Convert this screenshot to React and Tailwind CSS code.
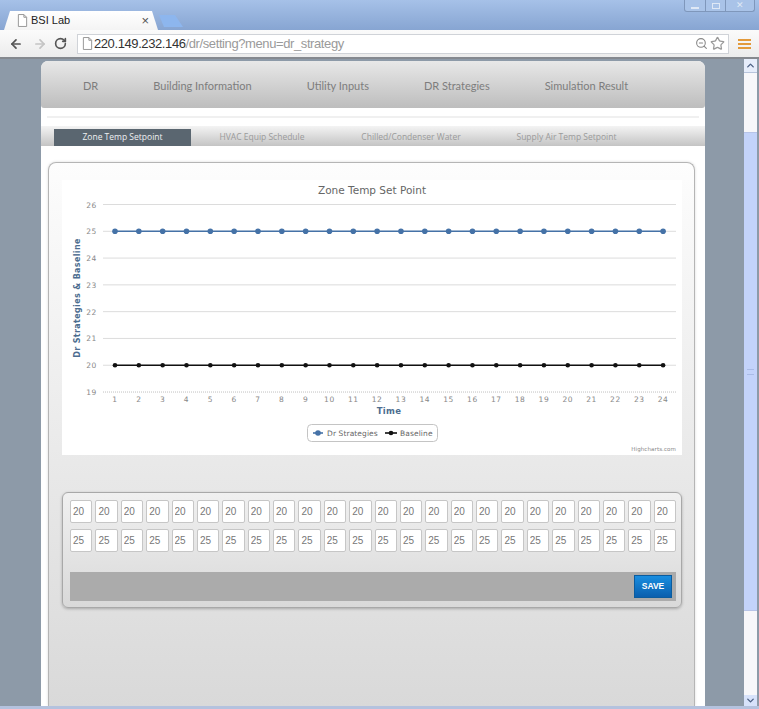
import React from "react";
import { ArrowLeft, ArrowRight, RotateCw, ZoomOut, Star, ChevronUp, ChevronDown } from "lucide-react";

const hours = Array.from({ length: 24 }, (_, i) => i + 1);
const yLabels = [26, 25, 24, 23, 22, 21, 20, 19];

// chart coordinates, origin is the top left of the white chart box
const xAt = (h) => 53 + (h - 1) * 23.83;
const yAt = (v) => 24.5 + (26 - v) * 26.79;

const FileIcon = ({ className }) => (
  <svg viewBox="0 0 12 14" className={className} fill="#fff" stroke="#8f8f8f">
    <path d="M1.5 .5h6l3 3v10h-9z" />
    <path d="M7.5 .5v3h3" fill="none" />
  </svg>
);

const Chart = () => (
  <svg width="620" height="275" viewBox="0 0 620 275" className="block bg-white">
    <text x="310" y="14" textAnchor="middle" fontFamily="DejaVu Sans" fontSize="10.5" fill="#666">
      Zone Temp Set Point
    </text>
    {yLabels.map((v) => (
      <g key={v}>
        <line x1="41" x2="614" y1={yAt(v)} y2={yAt(v)} stroke={v === 19 ? "#c0c0c0" : "#dcdcdc"} strokeDasharray={v === 19 ? "1 1" : undefined} />
        <text x="35" y={yAt(v) + 3} textAnchor="end" fontFamily="DejaVu Sans" fontSize="7.5" letterSpacing=".6" fill="#888">
          {v}
        </text>
      </g>
    ))}
    <text
      transform="translate(18 118) rotate(-90)"
      textAnchor="middle"
      fontFamily="DejaVu Sans"
      fontSize="8"
      fontWeight="700"
      letterSpacing=".35"
      fill="#4d6d8f"
    >
      Dr Strategies &amp; Baseline
    </text>
    {hours.map((h) => (
      <text key={h} x={xAt(h)} y="222" textAnchor="middle" fontFamily="DejaVu Sans" fontSize="7.5" letterSpacing=".6" fill="#888">
        {h}
      </text>
    ))}
    <text x="327" y="234" textAnchor="middle" fontFamily="DejaVu Sans" fontSize="8.5" fontWeight="700" letterSpacing=".3" fill="#4d6d8f">
      Time
    </text>

    <line x1={xAt(1)} x2={xAt(24)} y1={yAt(25)} y2={yAt(25)} stroke="#4572a7" strokeWidth="1.6" />
    <line x1={xAt(1)} x2={xAt(24)} y1={yAt(20)} y2={yAt(20)} stroke="#111" strokeWidth="1.6" />
    {hours.map((h) => (
      <g key={h}>
        <circle cx={xAt(h)} cy={yAt(25)} r="2.8" fill="#4572a7" />
        <circle cx={xAt(h)} cy={yAt(20)} r="2.3" fill="#111" />
      </g>
    ))}

    <rect x="245.5" y="244.5" width="130" height="17" rx="4" fill="#fff" stroke="#c4c4c4" />
    <line x1="251" x2="261" y1="253" y2="253" stroke="#4572a7" strokeWidth="1.6" />
    <circle cx="256" cy="253" r="2.8" fill="#4572a7" />
    <text x="265" y="256" fontFamily="DejaVu Sans" fontSize="7.5" letterSpacing=".1" fill="#666">Dr Strategies</text>
    <line x1="323" x2="335" y1="253" y2="253" stroke="#111" strokeWidth="1.6" />
    <circle cx="329" cy="253" r="2.3" fill="#111" />
    <text x="338" y="256" fontFamily="DejaVu Sans" fontSize="7.5" letterSpacing=".1" fill="#666">Baseline</text>

    <text x="614" y="271" textAnchor="end" fontFamily="DejaVu Sans" fontSize="5.5" letterSpacing=".1" fill="#888">
      Highcharts.com
    </text>
  </svg>
);

const ValueRow = ({ value }) => (
  <div className="grid grid-cols-[repeat(24,minmax(0,1fr))] gap-x-[3px]">
    {hours.map((h) => (
      <input
        key={h}
        readOnly
        value={value}
        className="h-[23px] w-full min-w-0 rounded-[2px] border border-[#c6c6c6] bg-white pl-[2px] text-[10px] text-[#777] outline-none"
      />
    ))}
  </div>
);

export default function App() {
  return (
    <div className="flex h-[709px] w-[759px] flex-col overflow-hidden bg-[#b4c8e6] font-['Liberation_Sans',sans-serif]">
      {/* title bar + tabs */}
      <div className="flex h-[30px] shrink-0 items-end justify-between bg-gradient-to-b from-[#a6c1e8] to-[#87a5d2] pl-[4px]">
        <div className="flex items-end">
          <div className="flex h-[19px] w-[154px] items-center bg-gradient-to-b from-white to-[#f4f4f4] pl-[13px] pr-[9px] [clip-path:polygon(0_100%,6px_0,148px_0,100%_100%)]">
            <FileIcon className="h-[13px] w-[11px] shrink-0" />
            <span className="ml-[3px] text-[11px] text-[#222]">BSI Lab</span>
            <span className="ml-auto text-[13px] leading-none text-[#555]">×</span>
          </div>
          <div className="mb-[3px] ml-[1px] h-[12px] w-[24px] bg-[#8db6ee] [clip-path:polygon(0_0,16px_0,100%_100%,5px_100%)]" />
        </div>
        <div className="mr-[4px] flex h-[12px] w-[71px] self-start rounded-b-[3px] border border-t-0 border-[#7f97bb] bg-[#a9c3e8]">
          <div className="flex flex-1 items-end justify-center border-r border-[#7f97bb] pb-[2px]">
            <div className="h-[2px] w-[8px] bg-[#dfe8f5]" />
          </div>
          <div className="flex flex-1 items-center justify-center border-r border-[#7f97bb]">
            <div className="h-[6px] w-[8px] border border-[#dfe8f5]" />
          </div>
          <div className="flex flex-[1.4] items-center justify-center text-[9px] leading-none text-[#dfe8f5]">✕</div>
        </div>
      </div>

      {/* toolbar */}
      <div className="flex h-[27px] shrink-0 items-center bg-gradient-to-b from-[#fbfbfb] to-[#ececec] pl-[9px] pr-[8px]">
        <ArrowLeft size={14} strokeWidth={3} className="text-[#555]" />
        <ArrowRight size={14} strokeWidth={3} className="ml-[10px] text-[#c4c4c4]" />
        <RotateCw size={13} strokeWidth={3} className="ml-[7px] text-[#555]" />
        <div className="ml-[10px] flex h-[20px] w-[653px] items-center border border-[#d0d3d8] bg-white pl-[4px] pr-[3px]">
          <FileIcon className="h-[13px] w-[11px] shrink-0" />
          <span className="ml-[1px] text-[13px] tracking-[-.4px] text-[#333]">
            220.149.232.146<span className="text-[#9a9a9a]">/dr/setting?menu=dr_strategy</span>
          </span>
          <ZoomOut size={13} className="ml-auto text-[#888]" />
          <Star size={15} className="ml-[2px] text-[#999]" />
        </div>
        <div className="ml-[9px] flex w-[13px] flex-col gap-[2px]">
          <div className="h-[2px] bg-[#e39a3b]" />
          <div className="h-[2px] bg-[#e39a3b]" />
          <div className="h-[2px] bg-[#e39a3b]" />
        </div>
      </div>
      <div className="h-[2px] shrink-0 bg-[#85898f]" />

      <div className="flex min-h-0 flex-1 bg-[#8d9aa8]">
        {/* page */}
        <div className="ml-[41px] mt-[2px] flex w-[664px] flex-col overflow-hidden rounded-t-[7px] bg-white">
          <nav className="flex h-[47px] shrink-0 items-center gap-[55px] rounded-b-[3px] bg-gradient-to-b from-[#e8e8e8] to-[#bdbdbd] pl-[42px] pt-[3px] font-['Lato',sans-serif] text-[11px] text-[#7d7d7d]">
            <span>DR</span>
            <span>Building Information</span>
            <span>Utility Inputs</span>
            <span>DR Strategies</span>
            <span>Simulation Result</span>
          </nav>

          <div className="mx-[6px] mt-[8px] h-[2px] shrink-0 bg-[#f0f0f0]" />

          <div className="mt-[8px] flex h-[20px] shrink-0 items-end bg-gradient-to-b from-[#f4f4f4] to-[#c4c4c4] pl-[13px] font-['Open_Sans',sans-serif] text-[8.5px] text-[#9a9a9a]">
            <div className="flex h-[17px] w-[137px] items-center justify-center bg-[#5a6670] text-[#eef0f2]">Zone Temp Setpoint</div>
            <div className="flex h-[17px] w-[142px] items-center justify-center">HVAC Equip Schedule</div>
            <div className="flex h-[17px] w-[156px] items-center justify-center">Chilled/Condenser Water</div>
            <div className="flex h-[17px] w-[155px] items-center justify-center">Supply Air Temp Setpoint</div>
          </div>

          {/* card, runs past the bottom of the window */}
          <div className="ml-[7px] mr-[10px] mt-[16px] min-h-0 flex-1 rounded-t-[8px] border border-b-0 border-[#b5b5b5] bg-gradient-to-b from-[#fdfdfd] to-[#d9d9d9] pl-[13px] pr-[12px] pt-[17px] shadow-[0_0_3px_rgba(0,0,0,.15)]">
            <Chart />

            <div className="mt-[37px] h-[116px] rounded-[6px] border border-[#a8a8a8] bg-gradient-to-b from-[#f0f0f0] to-[#d9d9d9] pl-[7px] pr-[5px] pt-[7px] shadow-[0_1px_3px_rgba(0,0,0,.25)]">
              <div className="flex flex-col gap-[6px]">
                <ValueRow value="20" />
                <ValueRow value="25" />
              </div>
              <div className="mt-[20px] flex h-[29px] items-center justify-end bg-[#ababab] pr-[4px]">
                <button className="h-[23px] w-[38px] border border-[#0b5c9e] bg-gradient-to-b from-[#1a8ee0] to-[#0a5fae] text-[8.5px] font-bold text-white">
                  SAVE
                </button>
              </div>
            </div>
          </div>
        </div>

        {/* scrollbar */}
        <div className="ml-[39px] flex w-[13px] flex-col bg-[#f7f7fa]">
          <div className="flex h-[14px] items-center justify-center border-b border-[#b7c4dc] bg-[#e6edfb]">
            <ChevronUp size={11} strokeWidth={3} className="text-[#4d6185]" />
          </div>
          <div className="h-[59px]" />
          <div className="flex h-[479px] items-center justify-center border-y border-[#b7c4e8] bg-[#c3d3fa]">
            <div className="h-[6px] w-[7px] border-y border-[#a9bbe6]" />
          </div>
          <div className="flex-1" />
          <div className="flex h-[11px] items-center justify-center bg-[#d7e2fa]">
            <ChevronDown size={11} strokeWidth={3} className="text-[#4d6185]" />
          </div>
        </div>
      </div>
      <div className="h-[3px] shrink-0 bg-[#b4c2de]" />
    </div>
  );
}
